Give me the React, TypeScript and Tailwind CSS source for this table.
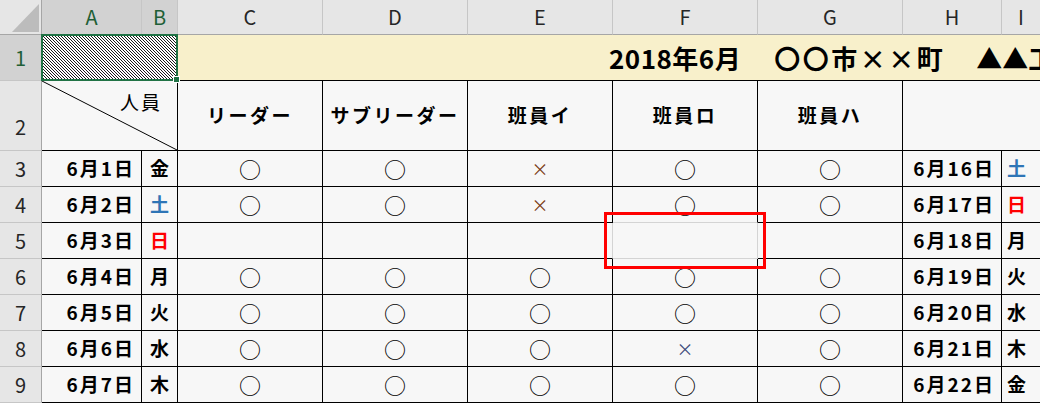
import React from 'react';

const font = { fontFamily: '"Noto Sans CJK JP", "Noto Sans", sans-serif' };

const cols = [
  { key: 'A', selected: true },
  { key: 'B', selected: true },
  { key: 'C', selected: false },
  { key: 'D', selected: false },
  { key: 'E', selected: false },
  { key: 'F', selected: false },
  { key: 'G', selected: false },
  { key: 'H', selected: false },
  { key: 'I', selected: false },
];

const members = ['リーダー', 'サブリーダー', '班員イ', '班員ロ', '班員ハ'];

const rows = [
  { n: 3, date: '6月1日', day: '金', marks: ['○', '○', '×', '○', '○'], date2: '6月16日', day2: '土' },
  { n: 4, date: '6月2日', day: '土', marks: ['○', '○', '×', '○', '○'], date2: '6月17日', day2: '日' },
  { n: 5, date: '6月3日', day: '日', marks: ['', '', '', '', ''], date2: '6月18日', day2: '月' },
  { n: 6, date: '6月4日', day: '月', marks: ['○', '○', '○', '○', '○'], date2: '6月19日', day2: '火' },
  { n: 7, date: '6月5日', day: '火', marks: ['○', '○', '○', '○', '○'], date2: '6月20日', day2: '水' },
  { n: 8, date: '6月6日', day: '水', marks: ['○', '○', '○', '×', '○'], date2: '6月21日', day2: '木' },
  { n: 9, date: '6月7日', day: '木', marks: ['○', '○', '○', '○', '○'], date2: '6月22日', day2: '金' },
];

function dayColor(d: string) {
  if (d === '土') return 'text-[#2e75b6]';
  if (d === '日') return 'text-[#ff0000]';
  return 'text-black';
}

// F5 has no borders, so the shared edges fall back to grid lines
function markBorder(n: number, i: number) {
  if (n === 4 && i === 3) return 'border-r border-b border-r-black border-b-[#d4d4d4]';
  if (n === 5 && i === 2) return 'border-r border-b border-r-[#d4d4d4] border-b-black';
  if (n === 5 && i === 3) return 'border-r border-b border-[#d4d4d4]';
  return 'border-r border-b border-black';
}

function markColor(n: number, i: number, m: string) {
  if (m !== '×') return 'text-black';
  if (i === 2) return 'text-[#7a3a12]';
  return 'text-[#3a4a7a]';
}

export default function App() {
  return (
    <div className="relative w-[1040px] h-[403px] overflow-hidden bg-[#f7f7f7]" style={font}>
      <div className="grid grid-cols-[42px_100px_36px_145px_145px_145px_145px_145px_99px_39px] grid-rows-[35px_46px_70px_repeat(7,36px)] w-[1041px]">
        {/* Corner */}
        <div className="relative bg-[#e6e6e6] border-r border-b border-r-[#a6a6a6] border-b-[#a6a6a6]">
          <svg className="absolute left-0 top-0" width="42" height="35">
            <polygon points="12,32 39,32 39,4" fill="#bcbcbc" />
          </svg>
        </div>

        {/* Column headers */}
        {cols.map((c) => (
          <div
            key={c.key}
            className={`flex items-center justify-center border-r border-b border-r-[#c6c6c6] border-b-[#a6a6a6] text-[20px] leading-none ${
              c.selected ? 'bg-[#d2d2d2] text-[#1f5f36]' : 'bg-[#e6e6e6] text-[#262626]'
            }`}
          >
            {c.key}
          </div>
        ))}

        {/* Row 1 */}
        <div className="flex items-center justify-center bg-[#d2d2d2] text-[#1f5f36] border-r border-b border-r-[#a6a6a6] border-b-[#c6c6c6] text-[20px] leading-none">
          1
        </div>
        <div className="col-span-2 border-b border-black bg-white">
          <svg width="136" height="45" shapeRendering="crispEdges">
            <defs>
              <pattern id="hatch" width="3" height="3" patternUnits="userSpaceOnUse">
                <rect x="0" y="0" width="1" height="1" fill="#1a1a1a" />
                <rect x="1" y="1" width="1" height="1" fill="#1a1a1a" />
                <rect x="2" y="2" width="1" height="1" fill="#1a1a1a" />
              </pattern>
            </defs>
            <rect width="136" height="45" fill="url(#hatch)" />
          </svg>
        </div>
        <div className="col-span-7 flex items-center border-b border-black bg-[#f8f0cb] pl-[431px] whitespace-nowrap overflow-hidden text-[26px] font-bold text-black leading-none">
          <span className="tracking-[0.5px]">2018年6月</span>
          <span className="ml-[33px] tracking-[2.5px]">〇〇市××町</span>
          <span className="ml-[31px]">▲▲工事　勤務表</span>
        </div>

        {/* Row 2 */}
        <div className="flex items-center justify-center bg-[#e6e6e6] text-[#262626] border-r border-b border-r-[#a6a6a6] border-b-[#c6c6c6] text-[20px] leading-none pt-[22px]">
          2
        </div>
        <div className="relative col-span-2 flex justify-end border-r border-b border-black pt-[10px] pr-[15px]">
          <svg className="absolute inset-0" width="100%" height="100%" preserveAspectRatio="none">
            <line x1="0" y1="0" x2="100%" y2="100%" stroke="#000" strokeWidth="1" />
          </svg>
          <span className="text-[19px] leading-[22px] tracking-[2px] text-black">人員</span>
        </div>
        {members.map((m) => (
          <div
            key={m}
            className="flex items-center justify-center border-r border-b border-black text-[19px] font-bold tracking-[2.5px] text-black whitespace-nowrap"
          >
            {m}
          </div>
        ))}
        <div className="col-span-2 border-r border-b border-black" />

        {/* Rows 3-9 */}
        {rows.map((r) => (
          <React.Fragment key={r.n}>
            <div className="flex items-center justify-center bg-[#e6e6e6] text-[#262626] border-r border-b border-r-[#a6a6a6] border-b-[#c6c6c6] text-[20px] leading-none">
              {r.n}
            </div>
            <div className="flex items-center justify-end border-r border-b border-black pr-[6px] text-[19px] font-bold tracking-[2px] text-black whitespace-nowrap">
              {r.date}
            </div>
            <div className={`flex items-center justify-center border-r border-b border-black text-[19px] font-bold ${dayColor(r.day)}`}>
              {r.day}
            </div>
            {r.marks.map((m, i) => (
              <div
                key={i}
                className={`flex items-center justify-center ${markBorder(r.n, i)} ${
                  m === '×' ? 'text-[17px]' : 'text-[22px]'
                } ${markColor(r.n, i, m)}`}
              >
                {m}
              </div>
            ))}
            <div className="flex items-center justify-end border-r border-b border-black pr-[6px] text-[19px] font-bold tracking-[2px] text-black whitespace-nowrap">
              {r.date2}
            </div>
            <div className={`flex items-center justify-start pl-[5px] border-r border-b border-black text-[19px] font-bold ${dayColor(r.day2)}`}>
              {r.day2}
            </div>
          </React.Fragment>
        ))}
      </div>

      {/* Selection outline on A1:B1 */}
      <div className="absolute left-[41px] top-[34px] w-[137px] h-[47px] border-2 border-[#217346]" />
      <div className="absolute left-[173px] top-[76px] w-[7px] h-[7px] bg-[#217346] border border-white" />

      {/* Red callout box */}
      <div className="absolute left-[604px] top-[212px] w-[162px] h-[57px] border-[3px] border-[#ff0000]" />
    </div>
  );
}
